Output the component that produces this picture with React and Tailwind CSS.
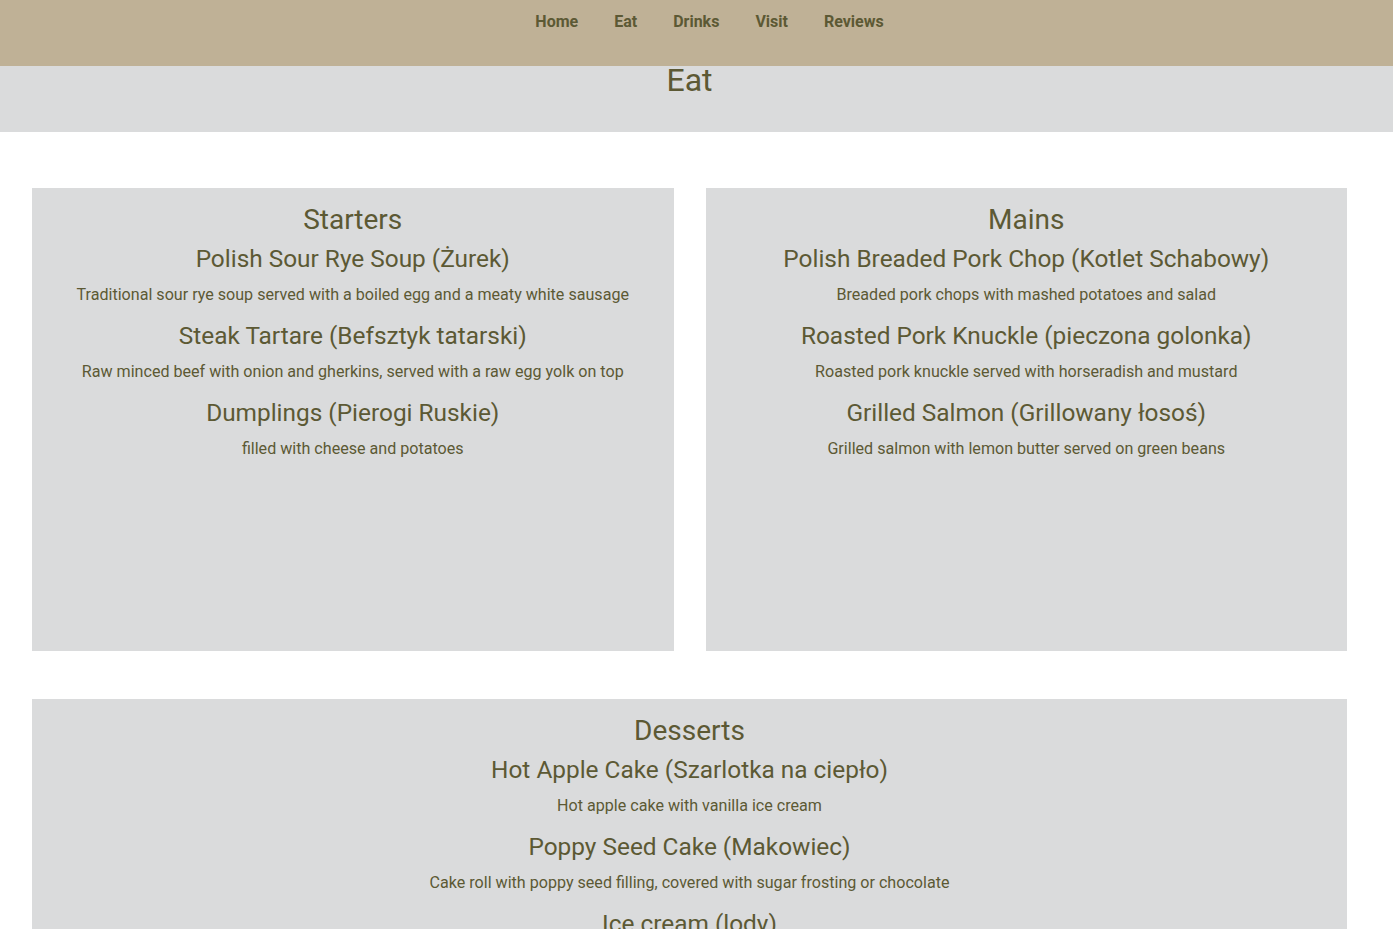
const links = ['Home', 'Eat', 'Drinks', 'Visit', 'Reviews'];

const menu = {
  starters: [
    {
      name: 'Polish Sour Rye Soup (Żurek)',
      desc: 'Traditional sour rye soup served with a boiled egg and a meaty white sausage',
    },
    {
      name: 'Steak Tartare (Befsztyk tatarski)',
      desc: 'Raw minced beef with onion and gherkins, served with a raw egg yolk on top',
    },
    { name: 'Dumplings (Pierogi Ruskie)', desc: 'filled with cheese and potatoes' },
  ],
  mains: [
    {
      name: 'Polish Breaded Pork Chop (Kotlet Schabowy)',
      desc: 'Breaded pork chops with mashed potatoes and salad',
    },
    {
      name: 'Roasted Pork Knuckle (pieczona golonka)',
      desc: 'Roasted pork knuckle served with horseradish and mustard',
    },
    {
      name: 'Grilled Salmon (Grillowany łosoś)',
      desc: 'Grilled salmon with lemon butter served on green beans',
    },
  ],
  desserts: [
    {
      name: 'Hot Apple Cake (Szarlotka na ciepło)',
      desc: 'Hot apple cake with vanilla ice cream',
    },
    {
      name: 'Poppy Seed Cake (Makowiec)',
      desc: 'Cake roll with poppy seed filling, covered with sugar frosting or chocolate',
    },
    { name: 'Ice cream (lody)', desc: 'Vanilla, chocolate or strawberry' },
  ],
};

function MenuCard({ title, items, className }) {
  return (
    <section className={`bg-[#dadbdc] pt-[16px] text-center ${className}`}>
      <h2 className="text-[28px] leading-[32px] font-normal mb-[9px]">{title}</h2>
      <div className="flex flex-col gap-[15px]">
        {items.map((it) => (
          <div key={it.name}>
            <h3 className="text-[24.4px] leading-[28px]">{it.name}</h3>
            <p className="mt-[10px] text-[16.1px] leading-[24px]">{it.desc}</p>
          </div>
        ))}
      </div>
    </section>
  );
}

export default function App() {
  return (
    <div
      className="w-[1379px] bg-white text-[#5c5934] min-h-[929px]"
      style={{ fontFamily: 'Roboto, "Liberation Sans", sans-serif' }}
    >
      {/* nav */}
      <nav className="h-[66px] bg-[#bfb196] w-[1393px]">
        <ul className="w-[1379px] flex justify-center gap-[36px] pl-10 pt-[11px]">
          {links.map((l) => (
            <li key={l} className="text-[16px] leading-[22px] font-bold">
              {l}
            </li>
          ))}
        </ul>
      </nav>

      <header className="h-[66px] bg-[#dadbdc] w-[1393px]">
        <h1 className="w-[1379px] text-center text-[32px] leading-[28px] font-normal">Eat</h1>
      </header>

      <main className="pl-[32px] pr-[32px] pt-[56px]">
        <div className="grid grid-cols-2 gap-[32px]">
          <MenuCard title="Starters" items={menu.starters} className="h-[463px]" />
          <MenuCard title="Mains" items={menu.mains} className="h-[463px]" />
        </div>
        <MenuCard title="Desserts" items={menu.desserts} className="mt-[48px] h-[463px]" />
      </main>
    </div>
  );
}
